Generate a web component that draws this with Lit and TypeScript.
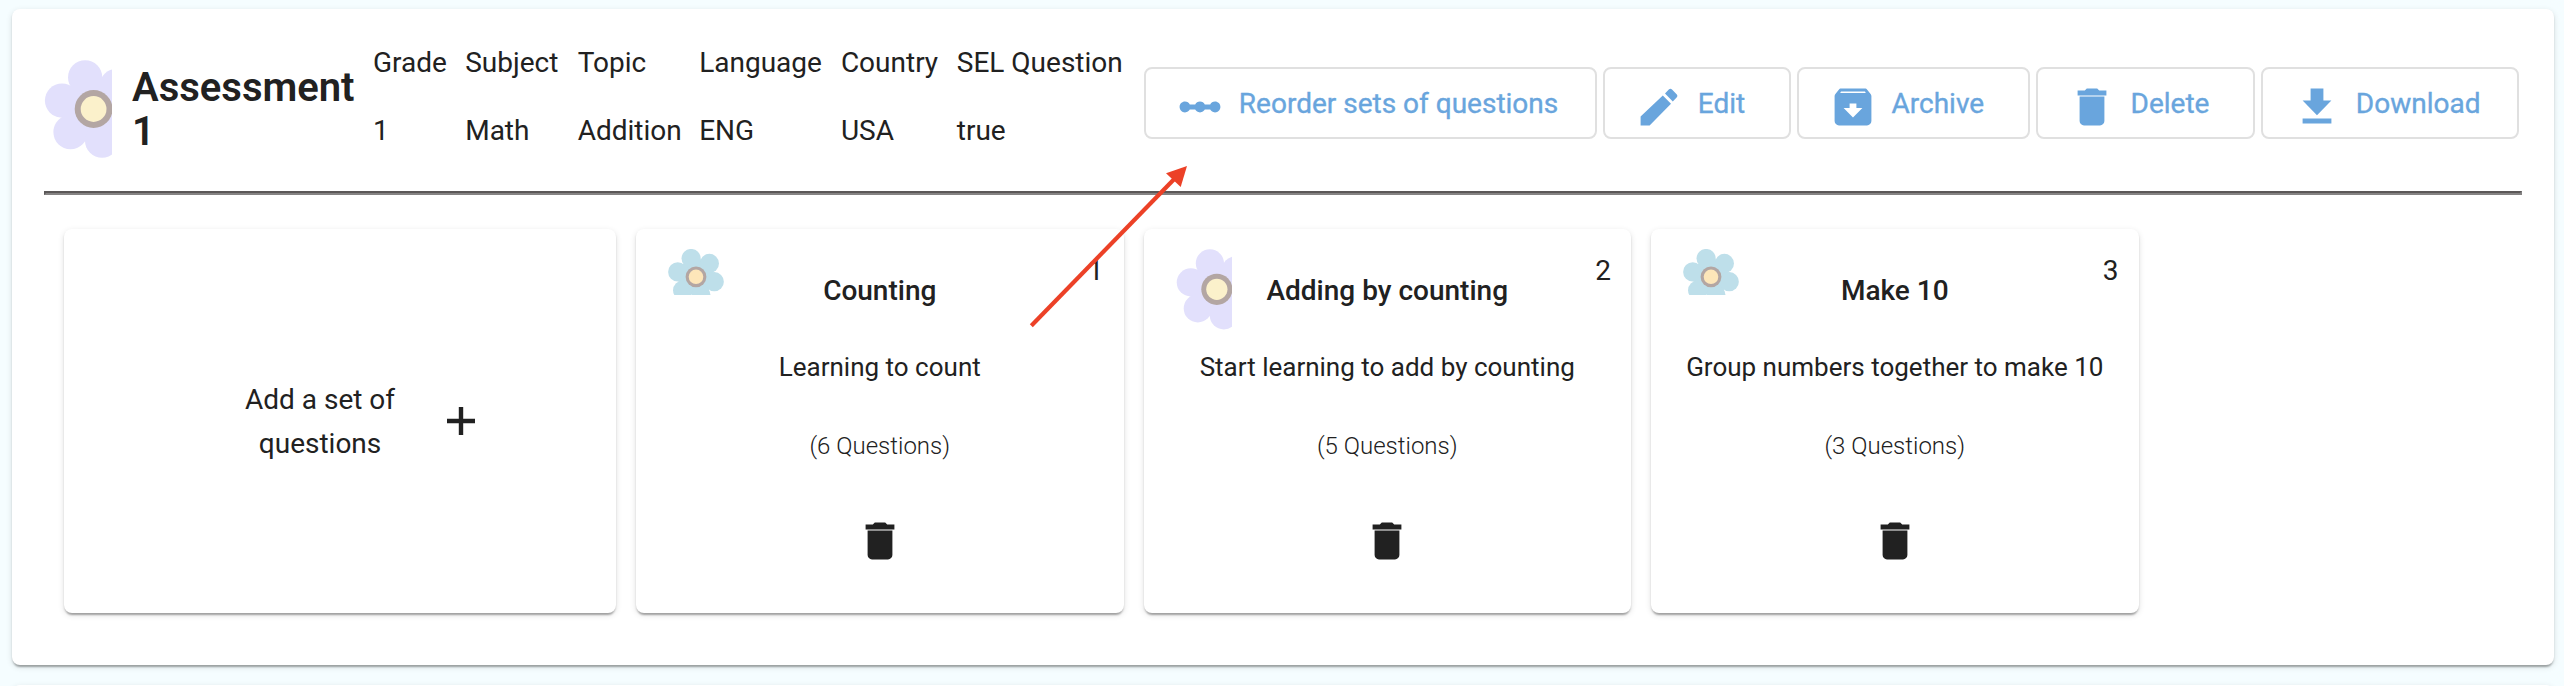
import { LitElement, html, css, svg } from "lit";
import { customElement, property } from "lit/decorators.js";
import { classMap } from "lit/directives/class-map.js";

const ICONS: Record<string, string> = {
  reorder:
    "M19.5 9.3c-1.1 0-2 .6-2.4 1.5h-2.7c-.4-.9-1.3-1.5-2.4-1.5s-2 .6-2.4 1.5H6.9c-.4-.9-1.3-1.5-2.4-1.5C3 9.3 1.8 10.5 1.8 12S3 14.7 4.5 14.7c1.1 0 2-.6 2.4-1.4h2.7c.4.8 1.3 1.4 2.4 1.4s2-.6 2.4-1.4h2.7c.4.8 1.3 1.4 2.4 1.4 1.5 0 2.7-1.2 2.7-2.7s-1.2-2.7-2.7-2.7z",
  edit: "M2.8 16.7V21.2h4.5L18 10.4l-4.1-4.1zM15 5.2L16.9 3.3c.5-.5 1.1-.5 1.6 0l2.3 2.3c.5.5.5 1.1 0 1.6L18.9 9.2z",
  archive:
    "M20.6 5.2l-1.5-1.8C18.9 3 18.4 2.8 18 2.8H6c-.4 0-.9.2-1.1.6L3.4 5.2C3 5.6 2.8 6 2.8 6.5V19c0 1.2 1 2.2 2.2 2.2h14c1.2 0 2.2-1 2.2-2.2V6.5c0-.5-.2-.9-.6-1.3zM12 17.2L7.3 12.5H10.3V10.2h3.4v2.3h3zM6 4.2h12l.4.8H5.6z",
  trash:
    "M5.8 19c0 1.2 1 2.2 2.2 2.2h8c1.2 0 2.2-1 2.2-2.2V6.8H5.8zM19.2 3.8h-3.6l-1-1H9.4l-1 1H4.8v2.5h14.4z",
  download: "M19.2 8.8h-4V2.8H8.8v6H4.8l7.2 7.3zM4.8 17.8v2.4h14.4v-2.4z",
  plus: "M19 13.1h-5.9v5.9h-2.2v-5.9H5v-2.2h5.9V5h2.2v5.9H19z",
};

@customElement("m-icon")
class MIcon extends LitElement {
  @property() name = "";
  static styles = css`
    :host { display: block; width: 48px; height: 48px; flex: none; }
    svg { display: block; width: 48px; height: 48px; fill: currentColor; }
  `;
  render() {
    return html`<svg viewBox="0 0 24 24"><path fill-rule="evenodd" d=${ICONS[this.name]}></path></svg>`;
  }
}

interface Bloom {
  w: number; h: number; cx: number; cy: number; dist: number; petal: number;
  ring: number; core: number; fill: string; coreFill: string;
}

const BLOOMS: Record<string, Bloom> = {
  lilac: { w: 68, h: 98, cx: 49.6, cy: 49, dist: 32.7, petal: 17.1, ring: 18.9, core: 12.9, fill: "#e2e0fc", coreFill: "#fbf1cb" },
  sky: { w: 56, h: 46, cx: 28, cy: 27.8, dist: 18.9, petal: 9.6, ring: 10.4, core: 7.3, fill: "#bedfea", coreFill: "#fde6b9" },
};

@customElement("flower-picture")
class FlowerPicture extends LitElement {
  @property() kind = "lilac";
  static styles = css`
    :host { display: block; flex: none; }
    svg { display: block; width: 100%; overflow: hidden; }
  `;
  render() {
    const b = BLOOMS[this.kind];
    const petals = [45, 105, 165, 225, 285, 345].map((deg) => {
      const a = (deg * Math.PI) / 180;
      return svg`<circle cx=${b.cx + b.dist * Math.cos(a)} cy=${b.cy - b.dist * Math.sin(a)} r=${b.petal} fill=${b.fill}></circle>`;
    });
    return html`<svg viewBox="0 0 ${b.w} ${b.h}">
      <circle cx=${b.cx} cy=${b.cy} r=${b.dist * 0.96} fill=${b.fill}></circle>
      ${petals}
      <circle cx=${b.cx} cy=${b.cy} r=${b.ring} fill="#b3a6a3"></circle>
      <circle cx=${b.cx} cy=${b.cy} r=${b.core} fill=${b.coreFill}></circle>
    </svg>`;
  }
}

const FACTS = [
  ["Grade", "1"],
  ["Subject", "Math"],
  ["Topic", "Addition"],
  ["Language", "ENG"],
  ["Country", "USA"],
  ["SEL Question", "true"],
];

const ACTIONS = [
  { icon: "reorder", label: "Reorder sets of questions", wide: false },
  { icon: "edit", label: "Edit", wide: true },
  { icon: "archive", label: "Archive", wide: true },
  { icon: "trash", label: "Delete", wide: true },
  { icon: "download", label: "Download", wide: false },
];

const SETS = [
  { kind: "sky", title: "Counting", text: "Learning to count", count: 6 },
  { kind: "lilac", title: "Adding by counting", text: "Start learning to add by counting", count: 5 },
  { kind: "sky", title: "Make 10", text: "Group numbers together to make 10", count: 3 },
];

@customElement("app-root")
class AppRoot extends LitElement {
  static styles = css`
    :host {
      display: block; position: relative; box-sizing: border-box;
      width: 2564px; height: 686px; padding: 9px 10px 0 12px; overflow: hidden;
      background: #f5fdff; color: #212121;
      font: 400 28px/44px Roboto, sans-serif;
    }
    .panel, .card {
      box-sizing: border-box; background: #fff; border-radius: 8px;
      box-shadow: 0 4px 2px -2px rgba(0,0,0,.2), 0 2px 2px rgba(0,0,0,.14), 0 2px 6px rgba(0,0,0,.12);
    }
    .panel { height: 656px; padding: 32px; }
    .next { margin-top: 20px; }
    .head { display: flex; align-items: flex-start; height: 150px; }
    .logo { width: 68px; margin-top: 19px; }
    .name { margin: 25px 0 0 20px; width: 241px; font-size: 40px; font-weight: 600; line-height: 44px; }
    .facts {
      display: grid; grid-template-columns: 92.2px 112.5px 121.5px 141.7px 115.9px auto;
      grid-template-rows: 43px 43px; grid-auto-flow: column; row-gap: 25px;
      line-height: 43px; white-space: nowrap;
    }
    .actions { display: flex; gap: 6px; margin: 26px 3px 0 auto; }
    .btn {
      display: flex; align-items: center; box-sizing: border-box; height: 72px;
      padding: 1px 36.5px 0 30px; gap: 15px; border: 2px solid #e0e0e0; border-radius: 8px;
      background: #fff; color: #69a5dd; font: inherit; white-space: nowrap;
      -webkit-text-stroke: .35px #69a5dd;
    }
    .btn.wide { padding-right: 43.4px; }
    .btn m-icon { margin-top: 6px; }
    .rule { margin: 0; border-width: 2px; border-style: solid; border-color: #5b5858 #858383 #858383 #5b5858; }
    .sets { display: flex; gap: 20px; padding: 34px 0 0 20px; }
    .card { width: 487.5px; height: 384px; padding: 20px 20px 0 32px; }
    .add { display: flex; align-items: center; width: 552px; padding: 0 0 0 181px; gap: 42px; text-align: center; }
    .add-label { padding-top: 1px; }
    .top { display: grid; height: 83px; }
    .top > * { grid-area: 1 / 1; }
    .pic { width: 56px; align-self: start; justify-self: start; }
    .title { font-weight: 500; line-height: 83px; text-align: center; margin-right: 12px; }
    .num { line-height: 43px; justify-self: end; }
    .desc, .count { text-align: center; margin-right: 12px; white-space: nowrap; }
    .desc { font-size: 26px; margin-top: 13px; }
    .count { font-size: 24px; font-weight: 300; margin-top: 35px; }
    .del { margin: 48.5px auto 0; padding-right: 12px; }
    .arrow { position: absolute; left: 1020px; top: 155px; width: 180px; height: 180px; }
  `;

  render() {
    return html`
      <section class="panel">
        <header class="head">
          <flower-picture class="logo" kind="lilac"></flower-picture>
          <div class="name">Assessment 1</div>
          <div class="facts">
            ${FACTS.map(([k, v]) => html`<span>${k}</span><span>${v}</span>`)}
          </div>
          <div class="actions">
            ${ACTIONS.map(
              (a) => html`<button class=${classMap({ btn: true, wide: a.wide })}><m-icon name=${a.icon}></m-icon>${a.label}</button>`
            )}
          </div>
        </header>
        <hr class="rule" />
        <div class="sets">
          <div class="card add">
            <div class="add-label">Add a set of<br />questions</div>
            <m-icon name="plus"></m-icon>
          </div>
          ${SETS.map(
            (s, i) => html`<article class="card">
              <div class="top">
                <flower-picture class="pic" kind=${s.kind}></flower-picture>
                <div class="title">${s.title}</div>
                <div class="num">${i + 1}</div>
              </div>
              <div class="desc">${s.text}</div>
              <div class="count">(${s.count} Questions)</div>
              <m-icon class="del" name="trash"></m-icon>
            </article>`
          )}
        </div>
      </section>
      <section class="panel next"></section>
      <svg class="arrow" viewBox="1020 155 180 180">
        <path d="M1031.3 325.7L1174.5 178.8" stroke="#ec4127" stroke-width="4.2" fill="none"></path>
        <path d="M1187 166L1166 173.3 1180.7 187z" fill="#ec4127"></path>
      </svg>
    `;
  }
}
